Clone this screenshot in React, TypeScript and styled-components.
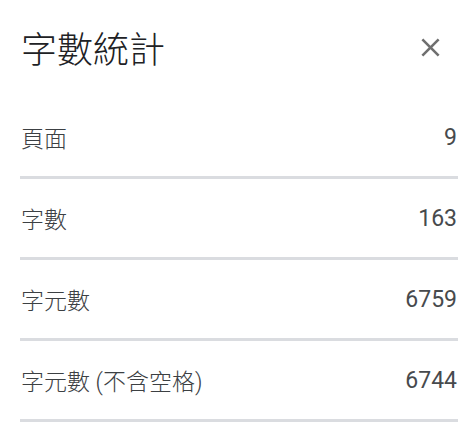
import styled, { createGlobalStyle } from 'styled-components'

const GlobalStyle = createGlobalStyle`
  body {
    margin: 0;
    background: #ffffff;
    font-family: Roboto, "Noto Sans CJK TC", sans-serif;
  }
`

const Panel = styled.div`
  width: 473px;
  height: 446px;
  background: #fff;
  overflow: hidden;
`

const Header = styled.div`
  display: flex;
  align-items: center;
  justify-content: space-between;
  height: 94px;
  padding: 0 27px 0 21px;
`

const Title = styled.h1`
  margin: 0;
  font-family: "Noto Sans CJK TC", sans-serif;
  font-size: 36px;
  font-weight: 300;
  color: #202124;
`

const CloseButton = styled.button`
  display: flex;
  align-items: center;
  justify-content: center;
  width: 31px;
  height: 31px;
  padding: 0;
  border: none;
  background: none;
  cursor: pointer;
  color: #6f6f6f;
`

const List = styled.div`
  display: flex;
  flex-direction: column;
  margin: 4px 15px 0 20px;
`

const Row = styled.div`
  display: flex;
  align-items: center;
  justify-content: space-between;
  height: 78px;
  border-bottom: 3px solid #dadce0;
  font-size: 23px;
  color: #3c4043;
`

const Label = styled.span`
  padding-left: 1px;
  font-weight: 300;
`

const Value = styled.span`
  padding-right: 1px;
  font-weight: 400;
  color: #474a4d;
`

const stats = [
  { label: '頁面', value: '9' },
  { label: '字數', value: '163' },
  { label: '字元數', value: '6759' },
  { label: '字元數 (不含空格)', value: '6744' },
]

export default function App() {
  return (
    <>
      <GlobalStyle />
      <Panel>
        <Header>
          <Title>字數統計</Title>
          <CloseButton aria-label="關閉">
            <svg width="31" height="31" viewBox="0 0 24 24" fill="currentColor">
              <path d="M19 6.41L17.59 5 12 10.59 6.41 5 5 6.41 10.59 12 5 17.59 6.41 19 12 13.41 17.59 19 19 17.59 13.41 12z" />
            </svg>
          </CloseButton>
        </Header>
        <List>
          {stats.map((s) => (
            <Row key={s.label}>
              <Label>{s.label}</Label>
              <Value>{s.value}</Value>
            </Row>
          ))}
        </List>
      </Panel>
    </>
  )
}
